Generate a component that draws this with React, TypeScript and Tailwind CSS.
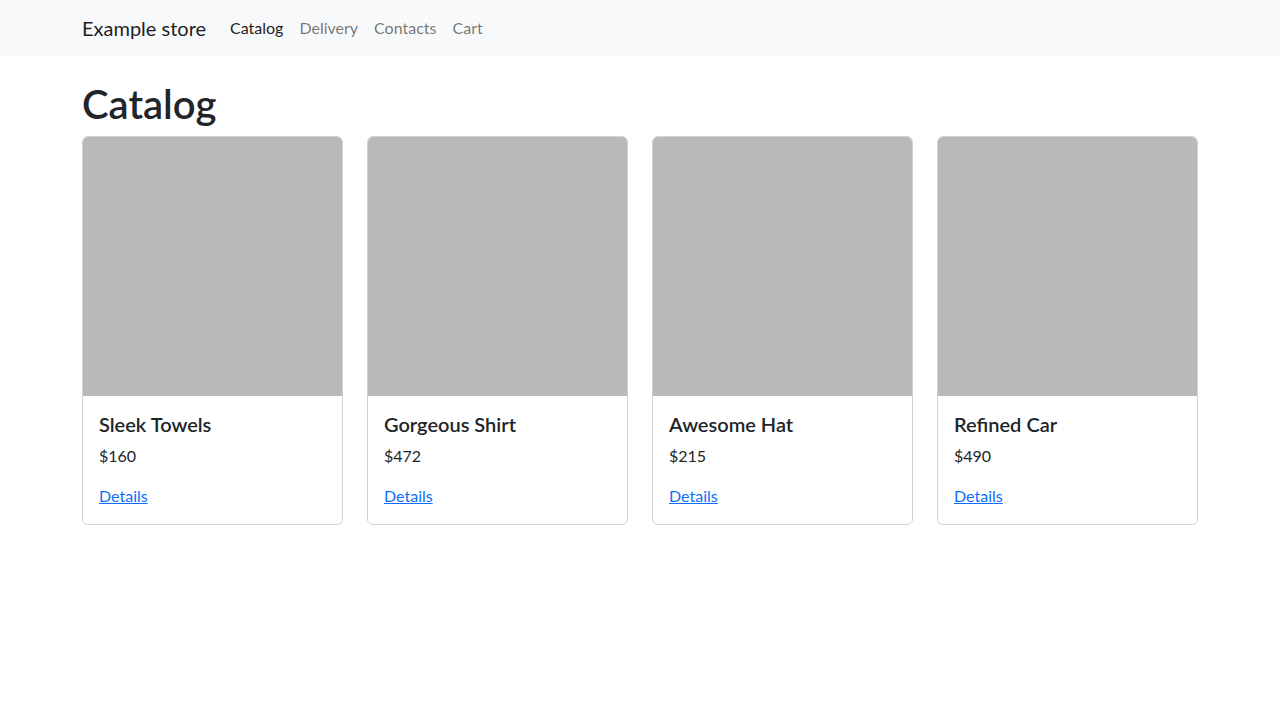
const products = [
  { name: 'Sleek Towels', price: 160 },
  { name: 'Gorgeous Shirt', price: 472 },
  { name: 'Awesome Hat', price: 215 },
  { name: 'Refined Car', price: 490 },
]

const links = ['Catalog', 'Delivery', 'Contacts', 'Cart']

export default function App() {
  return (
    <div className="min-h-screen bg-white text-[#212529] font-['Segoe_UI','Lato',sans-serif] text-base leading-6">
      {/* Navbar */}
      <nav className="bg-[#f8f9fa] py-2">
        <div className="mx-auto w-[1140px] px-3 flex items-center">
          <a href="#" className="py-[5px] mr-4 text-xl leading-[30px] text-black/90">
            Example store
          </a>
          <ul className="flex">
            {links.map((l, i) => (
              <li key={l}>
                <a
                  href="#"
                  className={`block px-2 py-2 ${i === 0 ? 'text-black/90' : 'text-black/55'}`}
                >
                  {l}
                </a>
              </li>
            ))}
          </ul>
        </div>
      </nav>

      {/* Content */}
      <main className="mx-auto w-[1140px] px-3 mt-6">
        <h1 className="text-[40px] leading-[48px] font-semibold mb-2">Catalog</h1>
        <div className="grid grid-cols-4 gap-6">
          {products.map((p) => (
            <div key={p.name} className="border border-black/[0.175] rounded-md overflow-hidden flex flex-col">
              <div className="h-[259px] bg-[#b9b9b9]" />
              <div className="p-4">
                <h5 className="text-xl leading-6 font-semibold mb-2">{p.name}</h5>
                <p className="mb-4">${p.price}</p>
                <a href="#" className="text-[#0d6efd] underline">
                  Details
                </a>
              </div>
            </div>
          ))}
        </div>
      </main>
    </div>
  )
}
